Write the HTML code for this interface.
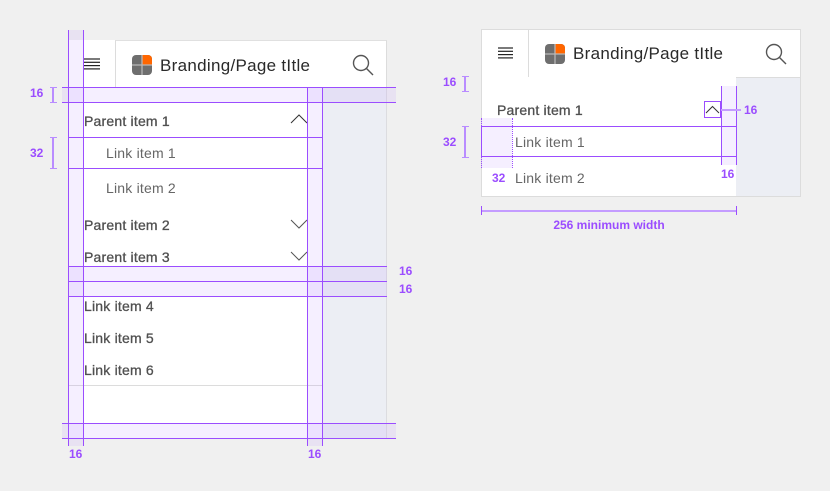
<!DOCTYPE html>
<html><head><style>
*{margin:0;padding:0;box-sizing:border-box}
body{width:830px;height:491px;background:#f0f0f0;position:relative;overflow:hidden;font-family:"Liberation Sans",sans-serif}
.a{position:absolute}
.t{position:absolute;font-size:14px;color:#666;line-height:16px;white-space:nowrap;letter-spacing:0.2px}
.b{color:#505050;-webkit-text-stroke:0.3px #505050}
.pl{position:absolute;font-size:12px;font-weight:bold;color:#9b4dff}
.hl{position:absolute;height:1px;background:#9b4dff}
.vl{position:absolute;width:1px;background:#9b4dff}
.band{position:absolute;background:rgba(190,150,255,0.15)}
</style></head><body>
<!-- LEFT -->
<div class="a" style="left:68px;top:40px;width:319px;height:398px;background:#eceef4;border-right:1px solid #dcdce0"></div>
<div class="a" style="left:68px;top:40px;width:47px;height:47px;background:#fff"></div>
<div class="a" style="left:115px;top:40px;width:272px;height:48px;background:#fff;border:1px solid #dcdcdc;border-top-color:#e0e0e0"></div>
<div class="a" style="left:68px;top:87px;width:254px;height:351px;background:#fff"></div>
<div class="a" style="left:68px;top:385px;width:254px;height:1px;background:#dcdcdc"></div>
<svg class="a" style="left:83px;top:58px" width="18" height="12"><g stroke="#222" stroke-width="1.2"><line x1="1" y1="1" x2="17" y2="1"/><line x1="1" y1="4.3" x2="17" y2="4.3"/><line x1="1" y1="7.6" x2="17" y2="7.6"/><line x1="1" y1="10.9" x2="17" y2="10.9"/></g></svg>
<svg class="a" style="left:132px;top:55px" width="20" height="20"><rect width="20" height="20" rx="4" fill="#6e6e6e"/><path d="M10.5 0H16a4 4 0 0 1 4 4v5.5h-9.5z" fill="#ff6600"/><rect x="9.4" y="0" width="1.2" height="20" fill="#bbb"/><rect x="0" y="9.4" width="20" height="1.2" fill="#bbb"/></svg>
<div class="t" style="left:160px;top:56px;font-size:17px;line-height:20px;color:#2a2a2a;letter-spacing:0.3px">Branding/Page tItle</div>
<svg class="a" style="left:352px;top:54px" width="22" height="22"><circle cx="9" cy="9" r="7.5" fill="none" stroke="#555" stroke-width="1.4"/><line x1="14.5" y1="14.5" x2="21" y2="21" stroke="#555" stroke-width="1.4"/></svg>
<div class="t b" style="left:84px;top:113px">Parent item 1</div>
<div class="t" style="left:106px;top:145px">Link item 1</div>
<div class="t" style="left:106px;top:180px">Link item 2</div>
<div class="t b" style="left:84px;top:217px">Parent item 2</div>
<div class="t b" style="left:84px;top:249px">Parent item 3</div>
<div class="t b" style="left:84px;top:298px">Link item 4</div>
<div class="t b" style="left:84px;top:330px">Link item 5</div>
<div class="t b" style="left:84px;top:362px">Link item 6</div>
<svg class="a" style="left:290px;top:114px" width="18" height="10"><path d="M1 9L9 1L17 9" fill="none" stroke="#333" stroke-width="1"/></svg>
<svg class="a" style="left:290px;top:219px" width="18" height="10"><path d="M1 1L9 9L17 1" fill="none" stroke="#555" stroke-width="1"/></svg>
<svg class="a" style="left:290px;top:251px" width="18" height="10"><path d="M1 1L9 9L17 1" fill="none" stroke="#555" stroke-width="1"/></svg>
<!-- overlays left -->
<div class="band" style="left:68px;top:30px;width:15px;height:416px"></div>
<div class="band" style="left:307px;top:87px;width:15px;height:359px"></div>
<div class="band" style="left:62px;top:87px;width:334px;height:15px"></div>
<div class="band" style="left:68px;top:266px;width:319px;height:30px"></div>
<div class="band" style="left:62px;top:423px;width:334px;height:15px"></div>
<div class="vl" style="left:68px;top:30px;height:416px"></div>
<div class="vl" style="left:83px;top:30px;height:416px"></div>
<div class="vl" style="left:307px;top:87px;height:359px"></div>
<div class="vl" style="left:322px;top:87px;height:359px"></div>
<div class="hl" style="left:62px;top:87px;width:334px"></div>
<div class="hl" style="left:62px;top:102px;width:334px"></div>
<div class="hl" style="left:68px;top:137px;width:254px"></div>
<div class="hl" style="left:68px;top:168px;width:254px"></div>
<div class="hl" style="left:68px;top:266px;width:319px"></div>
<div class="hl" style="left:68px;top:281px;width:319px"></div>
<div class="hl" style="left:68px;top:296px;width:319px"></div>
<div class="hl" style="left:62px;top:423px;width:334px"></div>
<div class="hl" style="left:62px;top:438px;width:334px"></div>
<div class="a" style="left:52px;top:87px;width:2px;height:15px;background:#b98cff"></div>
<div class="hl" style="left:50px;top:87px;width:7px;background:#b98cff"></div>
<div class="hl" style="left:50px;top:102px;width:7px;background:#b98cff"></div>
<div class="a" style="left:52px;top:137px;width:2px;height:31px;background:#b98cff"></div>
<div class="hl" style="left:50px;top:137px;width:7px;background:#b98cff"></div>
<div class="hl" style="left:50px;top:168px;width:7px;background:#b98cff"></div>
<div class="pl" style="left:30px;top:86px">16</div>
<div class="pl" style="left:30px;top:146px">32</div>
<div class="pl" style="left:399px;top:264px">16</div>
<div class="pl" style="left:399px;top:282px">16</div>
<div class="pl" style="left:69px;top:447px">16</div>
<div class="pl" style="left:308px;top:447px">16</div>
<!-- RIGHT -->
<div class="a" style="left:481px;top:29px;width:320px;height:168px;background:#eceef4;border:1px solid #dcdcdc"></div>
<div class="a" style="left:482px;top:30px;width:46px;height:166px;background:#fff"></div>
<div class="a" style="left:528px;top:29px;width:273px;height:49px;background:#fff;border:1px solid #dcdcdc;border-right:1px solid #dcdcdc"></div>
<div class="a" style="left:482px;top:77px;width:254px;height:119px;background:#fff"></div>
<svg class="a" style="left:497px;top:47px" width="18" height="12"><g stroke="#222" stroke-width="1.2"><line x1="1" y1="1" x2="16" y2="1"/><line x1="1" y1="4.3" x2="16" y2="4.3"/><line x1="1" y1="7.6" x2="16" y2="7.6"/><line x1="1" y1="10.9" x2="16" y2="10.9"/></g></svg>
<svg class="a" style="left:545px;top:44px" width="20" height="20"><rect width="20" height="20" rx="4" fill="#6e6e6e"/><path d="M10.5 0H16a4 4 0 0 1 4 4v5.5h-9.5z" fill="#ff6600"/><rect x="9.4" y="0" width="1.2" height="20" fill="#bbb"/><rect x="0" y="9.4" width="20" height="1.2" fill="#bbb"/></svg>
<div class="t" style="left:573px;top:44px;font-size:17px;line-height:20px;color:#2a2a2a;letter-spacing:0.3px">Branding/Page tItle</div>
<svg class="a" style="left:765px;top:43px" width="22" height="22"><circle cx="9" cy="9" r="7.5" fill="none" stroke="#555" stroke-width="1.4"/><line x1="14.5" y1="14.5" x2="21" y2="21" stroke="#555" stroke-width="1.4"/></svg>
<div class="t b" style="left:497px;top:102px">Parent item 1</div>
<div class="band" style="left:481px;top:118px;width:31px;height:50px"></div>
<div class="band" style="left:721px;top:86px;width:15px;height:79px"></div>
<div class="t" style="left:515px;top:134px">Link item 1</div>
<div class="t" style="left:515px;top:170px">Link item 2</div>
<svg class="a" style="left:704px;top:101px" width="18" height="18"><rect x="0.5" y="0.5" width="16" height="16" fill="none" stroke="#9b4dff"/><path d="M2 12L8.5 5.5L15 12" fill="none" stroke="#333"/></svg>
<div class="a" style="left:481px;top:126px;width:256px;height:31px;border:1px solid #9b4dff"></div>
<div class="a" style="left:512px;top:118px;height:50px;border-left:1px dotted #9b4dff"></div>
<div class="a" style="left:481px;top:118px;height:50px;border-left:1px dotted #9b4dff"></div>
<div class="vl" style="left:721px;top:86px;height:79px"></div>
<div class="vl" style="left:736px;top:86px;height:79px"></div>
<div class="a" style="left:721px;top:109px;width:20px;height:2px;background:#c49cff"></div>
<div class="pl" style="left:744px;top:103px">16</div>
<div class="pl" style="left:721px;top:167px">16</div>
<div class="pl" style="left:492px;top:171px">32</div>
<div class="a" style="left:464px;top:76px;width:2px;height:15px;background:#b98cff"></div>
<div class="hl" style="left:462px;top:76px;width:7px;background:#b98cff"></div>
<div class="hl" style="left:462px;top:91px;width:7px;background:#b98cff"></div>
<div class="pl" style="left:443px;top:75px">16</div>
<div class="a" style="left:464px;top:126px;width:2px;height:31px;background:#b98cff"></div>
<div class="hl" style="left:462px;top:126px;width:7px;background:#b98cff"></div>
<div class="hl" style="left:462px;top:157px;width:7px;background:#b98cff"></div>
<div class="pl" style="left:443px;top:135px">32</div>
<div class="a" style="left:481px;top:210px;width:256px;height:2px;background:#c49cff"></div>
<div class="vl" style="left:481px;top:206px;height:9px"></div>
<div class="vl" style="left:736px;top:206px;height:9px"></div>
<div class="pl" style="left:481px;top:218px;width:256px;text-align:center">256 minimum width</div>
</body></html>
